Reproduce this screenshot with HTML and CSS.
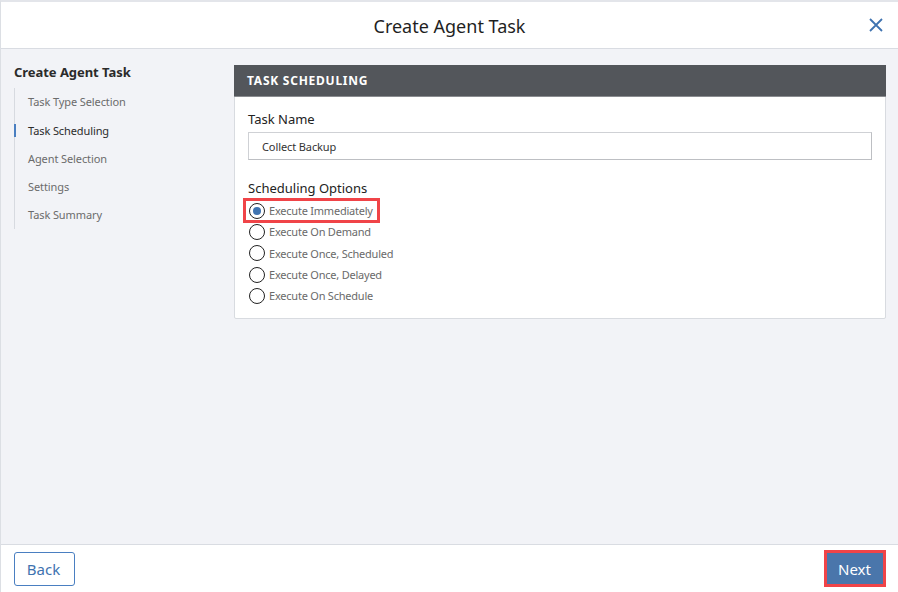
FILE: index.html
```html
<!DOCTYPE html>
<html>
<head>
<meta charset="utf-8">
<link rel="stylesheet" href="styles.css">
</head>
<body>
<div class="dialog">
  <header class="dlg-header">
    <h1 class="dlg-title">Create Agent Task</h1>
    <button class="close-btn" aria-label="Close">
      <svg width="14" height="14" viewBox="0 0 14 14"><path d="M1 1L13 13M13 1L1 13" stroke="#3f73b0" stroke-width="1.8" fill="none"/></svg>
    </button>
  </header>
  <main class="dlg-body">
    <nav class="steps">
      <div class="steps-title">Create Agent Task</div>
      <ul class="step-list">
        <li class="step">Task Type Selection</li>
        <li class="step active">Task Scheduling</li>
        <li class="step">Agent Selection</li>
        <li class="step">Settings</li>
        <li class="step">Task Summary</li>
      </ul>
    </nav>
    <section class="panel">
      <div class="panel-head">TASK SCHEDULING</div>
      <div class="panel-body">
        <label class="field-label">Task Name</label>
        <div class="text-input">Collect Backup</div>
        <div class="field-label opts-label">Scheduling Options</div>
        <div class="radio-group">
          <div class="radio-row highlighted"><span class="radio checked"></span><span class="radio-text">Execute Immediately</span></div>
          <div class="radio-row"><span class="radio"></span><span class="radio-text">Execute On Demand</span></div>
          <div class="radio-row"><span class="radio"></span><span class="radio-text">Execute Once, Scheduled</span></div>
          <div class="radio-row"><span class="radio"></span><span class="radio-text">Execute Once, Delayed</span></div>
          <div class="radio-row"><span class="radio"></span><span class="radio-text">Execute On Schedule</span></div>
        </div>
      </div>
    </section>
  </main>
  <footer class="dlg-footer">
    <button class="btn btn-back">Back</button>
    <button class="btn btn-next">Next</button>
  </footer>
</div>
</body>
</html>
```
FILE: styles.css
```css
* { box-sizing: border-box; }
html, body { margin: 0; padding: 0; }
body {
  width: 898px;
  height: 592px;
  font-family: "Noto Sans", "Open Sans", sans-serif;
  background: #ffffff;
  overflow: hidden;
}
.dialog {
  height: 592px;
  display: flex;
  flex-direction: column;
  border-top: 2px solid #e3e5ea;
  border-left: 1px solid #dcdfe4;
}
.dlg-header {
  height: 47px;
  flex: none;
  display: flex;
  align-items: center;
  justify-content: center;
  position: relative;
  border-bottom: 1px solid #d9dce2;
  background: #fff;
}
.dlg-title {
  margin: 0;
  font-size: 18px;
  font-weight: 400;
  color: #1f1f1f;
  transform: translateY(1px);
}
.close-btn {
  position: absolute;
  right: 15px;
  top: 16px;
  border: 0;
  background: transparent;
  padding: 0;
  width: 14px;
  height: 14px;
  line-height: 0;
}
.dlg-body {
  flex: 1;
  background: #f2f3f7;
  display: flex;
  padding: 16px 12px 0 13px;
}
.steps {
  width: 220px;
  flex: none;
}
.steps-title {
  font-size: 13px;
  font-weight: 700;
  color: #2b2b2b;
  line-height: 18px;
  margin-top: -2px;
  letter-spacing: -0.05px;
}
.step-list {
  list-style: none;
  margin: 7px 0 0 0;
  padding: 0;
  border-left: 1px solid #d7dae0;
}
.step {
  font-size: 11px;
  color: #6b6b6b;
  line-height: 16px;
  padding: 6px 0 6px 13px;
  position: relative;
  letter-spacing: -0.1px;
}
.step:first-child { padding-bottom: 7px; }
.step.active {
  color: #2b2b2b;
}
.step.active::before {
  content: "";
  position: absolute;
  left: -1px;
  top: 7px;
  width: 2px;
  height: 13px;
  background: #4a7fc1;
}
.panel {
  flex: 1;
  align-self: flex-start;
  background: #fff;
  border: 1px solid #d8dbe0;
  border-radius: 2px;
}
.panel-head {
  height: 32px;
  background: #53565b;
  color: #fff;
  font-size: 12px;
  font-weight: 700;
  letter-spacing: 0.75px;
  padding-left: 13px;
  display: flex;
  align-items: center;
  border-bottom: 1px solid #8a8c90;
  margin: -1px -1px 0 -1px;
}
.panel-body {
  padding: 13px 13px 12px 13px;
}
.field-label {
  display: block;
  font-size: 13px;
  color: #222;
  line-height: 18px;
}
.text-input {
  margin-top: 4px;
  height: 28px;
  border: 1px solid #cfd1d5;
  border-right-color: #bdbfc3;
  border-bottom-color: #bdbfc3;
  font-size: 11px;
  color: #333;
  display: flex;
  align-items: center;
  padding-left: 13px;
  letter-spacing: -0.1px;
}
.opts-label {
  margin-top: 19px;
}
.radio-group {
  display: flex;
  flex-direction: column;
  margin-top: 3px;
}
.radio-row {
  display: flex;
  align-items: center;
  gap: 4px;
  height: 21.3px;
  align-self: flex-start;
}
.radio-row.highlighted {
  outline: 3px solid #f04448;
  outline-offset: 0px;
  margin-left: -2px;
  padding-left: 2px;
  padding-right: 4px;
  height: 19.3px;
  margin-top: 1px;
  margin-bottom: 1px;
}
.radio {
  width: 16px;
  height: 16px;
  border: 1.3px solid #222;
  border-radius: 50%;
  background: #fff;
  display: inline-flex;
  align-items: center;
  justify-content: center;
  margin-left: 1px;
  flex: none;
}
.radio.checked::after {
  content: "";
  width: 8px;
  height: 8px;
  border-radius: 50%;
  background: #3f73b0;
}
.radio-text {
  font-size: 11px;
  color: #6a6a6a;
  letter-spacing: -0.22px;
}
.dlg-footer {
  height: 48px;
  flex: none;
  border-top: 1px solid #d9dce2;
  background: #fff;
  display: flex;
  align-items: center;
  justify-content: space-between;
  padding: 0 12px 0 13px;
}
.btn {
  font-family: "Noto Sans", "Open Sans", sans-serif;
  font-size: 15px;
  height: 34px;
  border-radius: 3px;
  padding: 0;
  cursor: pointer;
}
.btn-back {
  background: #fff;
  border: 1px solid #4a7fc1;
  color: #3f73b0;
  width: 61px;
  padding-right: 2px;
}
.btn-next {
  background: #4a76ab;
  color: #fff;
  border: none;
  outline: 3px solid #f04448;
  outline-offset: 0;
  border-radius: 0;
  width: 56px;
  height: 31px;
  margin-right: 3px;
  padding-right: 1px;
}
```
